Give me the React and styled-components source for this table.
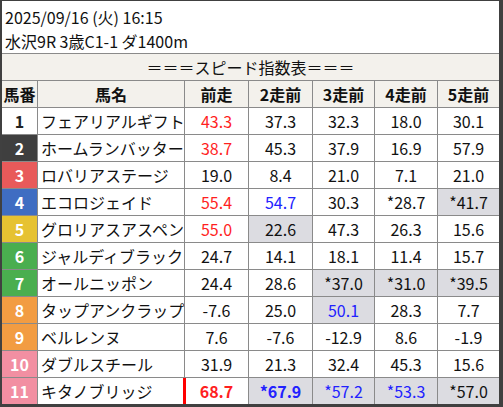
import React from "react";
import styled, { createGlobalStyle, css } from "styled-components";

const Global = createGlobalStyle`
  html, body { margin: 0; padding: 0; background: #fff; }
  body { font-family: "Noto Sans CJK JP", "Noto Sans", sans-serif; color: #111; }
`;

const Frame = styled.div`
  box-sizing: border-box;
  width: 503px;
  height: 407px;
  border-left: 2px solid #404040;
  border-right: 4px solid #404040;
  border-bottom: 3px solid #404040;
  border-top: 1px solid #404040;
  display: flex;
  flex-direction: column;
  overflow: hidden;
`;

const Info = styled.div`
  padding: 4px 0 0 3px;
  height: 48px;
  font-size: 16px;
  line-height: 24px;
  color: #111;
  border-bottom: 1px solid #8a8a8a;
`;

const Grid = styled.div`
  display: grid;
  grid-template-columns: 35px 146px 63px 63px 61px 62px 1fr;
  grid-auto-rows: 26px;
  gap: 1px;
  background: #8a8a8a;
  flex: 1;
`;

const Title = styled.div`
  grid-column: 1 / -1;
  background: #f3f1ec;
  text-align: center;
  font-size: 16px;
  line-height: 26px;
`;

const Head = styled.div`
  background: #f3f1ec;
  text-align: center;
  font-size: 16px;
  font-weight: 700;
  line-height: 26px;
`;

const WAKU = {
  1: ["#ffffff", "#222"],
  2: ["#3f3f3f", "#fff"],
  3: ["#e85a5a", "#fff"],
  4: ["#3f6dc2", "#fff"],
  5: ["#e6c232", "#fff"],
  6: ["#4aae4f", "#fff"],
  7: ["#4aae4f", "#fff"],
  8: ["#f29c42", "#fff"],
  9: ["#f29c42", "#fff"],
  10: ["#f28fa2", "#fff"],
  11: ["#f28fa2", "#fff"],
};

const Num = styled.div`
  background: ${(p) => WAKU[p.$n][0]};
  color: ${(p) => WAKU[p.$n][1]};
  text-align: center;
  font-size: 16px;
  font-weight: 700;
  line-height: 26px;
`;

const Name = styled.div`
  background: #fff;
  font-size: 16px;
  line-height: 26px;
  padding-left: 3px;
  white-space: nowrap;
  overflow: hidden;
`;

const COLORS = { r: "#ff1f1f", b: "#2222ff", k: "#111" };

const Val = styled.div`
  position: relative;
  background: ${(p) => (p.$hl ? "#dcdce1" : "#fff")};
  color: ${(p) => COLORS[p.$c || "k"]};
  font-weight: ${(p) => (p.$bold ? 700 : 400)};
  text-align: center;
  font-size: 16px;
  line-height: 26px;
  ${(p) =>
    p.$mark &&
    css`
      &::before {
        content: "";
        position: absolute;
        left: -2px;
        top: 0;
        bottom: -3px;
        width: 3px;
        background: #ff0000;
      }
    `}
`;

// value spec: [text, color, highlight, bold, mark]
const rows = [
  [1, "フェアリアルギフト", [["43.3", "r"], ["37.3"], ["32.3"], ["18.0"], ["30.1"]]],
  [2, "ホームランバッター", [["38.7", "r"], ["45.3"], ["37.9"], ["16.9"], ["57.9"]]],
  [3, "ロバリアステージ", [["19.0"], ["8.4"], ["21.0"], ["7.1"], ["21.0"]]],
  [4, "エコロジェイド", [["55.4", "r"], ["54.7", "b"], ["30.3"], ["*28.7"], ["*41.7", "k", true]]],
  [5, "グロリアスアスペン", [["55.0", "r"], ["22.6", "k", true], ["47.3"], ["26.3"], ["15.6"]]],
  [6, "ジャルディブラック", [["24.7"], ["14.1"], ["18.1"], ["11.4"], ["15.7"]]],
  [7, "オールニッポン", [["24.4"], ["28.6"], ["*37.0", "k", true], ["*31.0", "k", true], ["*39.5", "k", true]]],
  [8, "タップアンクラップ", [["-7.6"], ["25.0"], ["50.1", "b", true], ["28.3"], ["7.7"]]],
  [9, "ベルレンヌ", [["7.6"], ["-7.6"], ["-12.9"], ["8.6"], ["-1.9"]]],
  [10, "ダブルスチール", [["31.9"], ["21.3"], ["32.4"], ["45.3"], ["15.6"]]],
  [11, "キタノブリッジ", [["68.7", "r", false, true, true], ["*67.9", "b", true, true], ["*57.2", "b", true], ["*53.3", "b", true], ["*57.0", "k", true]]],
];

const heads = ["馬番", "馬名", "前走", "2走前", "3走前", "4走前", "5走前"];

export default function App() {
  return (
    <>
      <Global />
      <Frame>
        <Info>
          <div>2025/09/16 (火) 16:15</div>
          <div>水沢9R 3歳C1-1 ダ1400m</div>
        </Info>
        <Grid>
          <Title>＝＝＝スピード指数表＝＝＝</Title>
          {heads.map((h) => (
            <Head key={h}>{h}</Head>
          ))}
          {rows.map(([n, name, vals]) => (
            <React.Fragment key={n}>
              <Num $n={n}>{n}</Num>
              <Name>{name}</Name>
              {vals.map(([t, c, hl, bold, mark], i) => (
                <Val key={i} $c={c} $hl={hl} $bold={bold} $mark={mark}>
                  {t}
                </Val>
              ))}
            </React.Fragment>
          ))}
        </Grid>
      </Frame>
    </>
  );
}
